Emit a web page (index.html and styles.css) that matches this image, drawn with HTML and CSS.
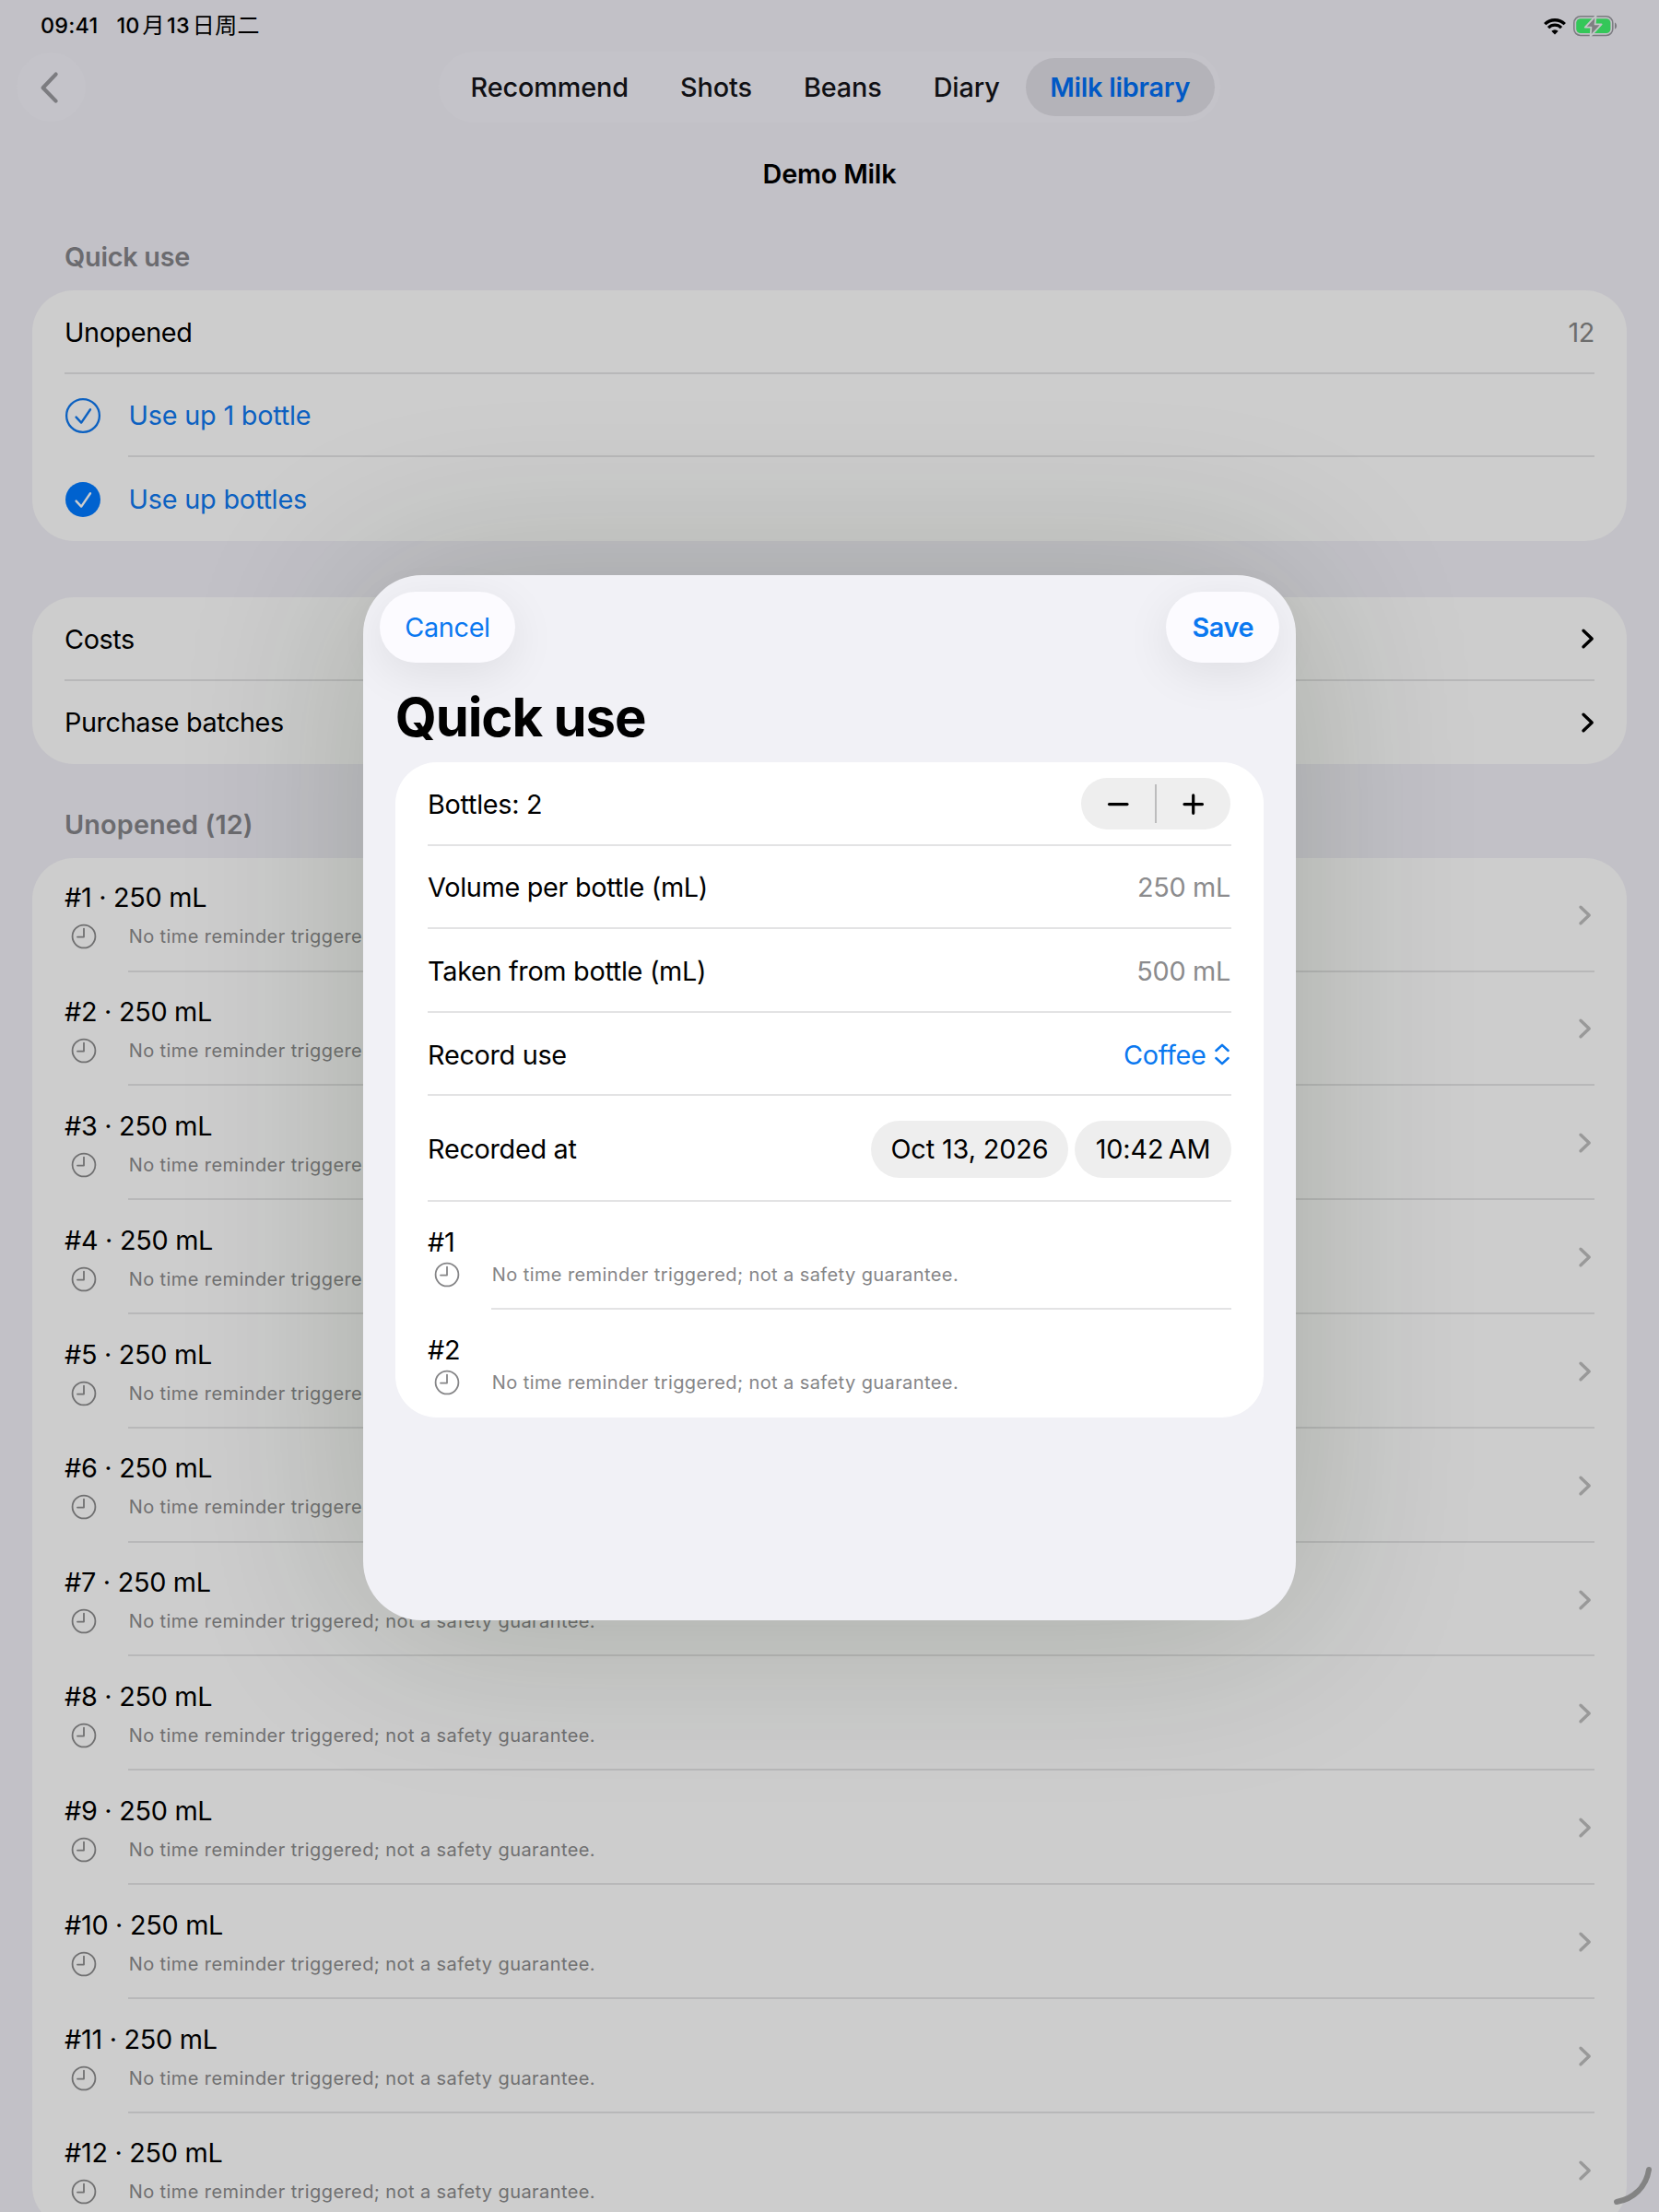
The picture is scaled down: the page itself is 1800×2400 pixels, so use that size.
FILE: index.html
```html
<!DOCTYPE html>
<html lang="en">
<head>
    <meta charset="utf-8">
    <title>Demo Milk</title>
    <link rel="stylesheet" href="styles.css">
</head>
<body>
    <svg class="symbols" aria-hidden="true">
        <symbol id="clock" viewBox="0 0 28 28">
            <circle cx="14" cy="14" r="12.4" fill="none" stroke="currentColor" stroke-width="1.8"/>
            <path d="M14 5.6V14.6H7" fill="none" stroke="currentColor" stroke-width="1.8" stroke-linecap="round" stroke-linejoin="round"/>
        </symbol>
        <symbol id="chevron" viewBox="0 0 16 24">
            <path d="M3 3.2L12.2 12L3 20.8" fill="none" stroke="currentColor" stroke-width="3.4" stroke-linecap="round" stroke-linejoin="round"/>
        </symbol>
    </svg>

    <div class="screen">
        <div class="status-bar">
            <span class="time">09:41</span>
            <span class="date">10<i>月</i>13<i>日周二</i></span>
            <svg class="wifi" viewBox="0 0 26 19">
                <path d="M2.2 7.2A15.3 15.3 0 0 1 23.8 7.2" fill="none" stroke="#000" stroke-width="3.3"/>
                <path d="M6 11.1A9.9 9.9 0 0 1 20 11.1" fill="none" stroke="#000" stroke-width="3.3"/>
                <path d="M13 18.4L9.3 14.7A5.3 5.3 0 0 1 16.7 14.7Z" fill="#000"/>
            </svg>
            <svg class="battery" viewBox="0 0 50 24">
                <rect x="1.8" y="1.8" width="42" height="20.6" rx="7" fill="none" stroke="#7b7b80" stroke-width="1.5"/>
                <rect x="4.2" y="4.2" width="37.2" height="15.8" rx="4.6" fill="#34c759"/>
                <path d="M46 8.6C48.8 9.6 48.8 14.6 46 15.6Z" fill="#7b7b80"/>
                <path d="M25.6 0.8L13.8 13.6H20.4L19.6 23.4L31.6 10.4H24.6Z" fill="#7f8082" stroke="#c3c7c8" stroke-width="1.8" stroke-linejoin="round"/>
            </svg>
        </div>

        <div class="toolbar">
            <div class="back">
                <svg viewBox="0 0 24 36"><path d="M18.6 3.6L4.6 18.2L18.6 32.6" fill="none" stroke="#7c7c80" stroke-width="4.2" stroke-linecap="round" stroke-linejoin="round"/></svg>
            </div>
            <nav class="tabs">
                <a class="tab">Recommend</a>
                <a class="tab">Shots</a>
                <a class="tab">Beans</a>
                <a class="tab">Diary</a>
                <a class="tab active">Milk library</a>
            </nav>
        </div>

        <h1 class="page-title">Demo Milk</h1>

        <h2 class="section-title first">Quick use</h2>
        <div class="card">
            <div class="row">
                <span>Unopened</span>
                <span class="count">12</span>
            </div>
            <div class="row link inset">
                <svg class="check" viewBox="0 0 40 40">
                    <circle cx="20" cy="20" r="17.9" fill="none" stroke="currentColor" stroke-width="2.3"/>
                    <path d="M12.6 21.6L18.2 27.6L28 13.2" fill="none" stroke="currentColor" stroke-width="2.4" stroke-linecap="round" stroke-linejoin="round"/>
                </svg>
                <span>Use up 1 bottle</span>
            </div>
            <div class="row link">
                <svg class="check" viewBox="0 0 40 40">
                    <circle cx="20" cy="20" r="19" fill="#0062cf"/>
                    <path d="M12.6 21.6L18.2 27.6L28 13.2" fill="none" stroke="#cdcdcd" stroke-width="2.4" stroke-linecap="round" stroke-linejoin="round"/>
                </svg>
                <span>Use up bottles</span>
            </div>
        </div>

        <div class="card spaced">
            <div class="row">
                <span>Costs</span>
                <svg class="chevron dark"><use href="#chevron"/></svg>
            </div>
            <div class="row">
                <span>Purchase batches</span>
                <svg class="chevron dark"><use href="#chevron"/></svg>
            </div>
        </div>

        <h2 class="section-title">Unopened (12)</h2>
        <div class="card">
            <div class="bottle">
                <div class="bottle-info">
                    <div class="bottle-name">#1 · 250 mL</div>
                    <div class="note"><svg class="clock"><use href="#clock"/></svg>No time reminder triggered; not a safety guarantee.</div>
                </div>
                <svg class="chevron"><use href="#chevron"/></svg>
            </div>
            <div class="bottle">
                <div class="bottle-info">
                    <div class="bottle-name">#2 · 250 mL</div>
                    <div class="note"><svg class="clock"><use href="#clock"/></svg>No time reminder triggered; not a safety guarantee.</div>
                </div>
                <svg class="chevron"><use href="#chevron"/></svg>
            </div>
            <div class="bottle">
                <div class="bottle-info">
                    <div class="bottle-name">#3 · 250 mL</div>
                    <div class="note"><svg class="clock"><use href="#clock"/></svg>No time reminder triggered; not a safety guarantee.</div>
                </div>
                <svg class="chevron"><use href="#chevron"/></svg>
            </div>
            <div class="bottle">
                <div class="bottle-info">
                    <div class="bottle-name">#4 · 250 mL</div>
                    <div class="note"><svg class="clock"><use href="#clock"/></svg>No time reminder triggered; not a safety guarantee.</div>
                </div>
                <svg class="chevron"><use href="#chevron"/></svg>
            </div>
            <div class="bottle">
                <div class="bottle-info">
                    <div class="bottle-name">#5 · 250 mL</div>
                    <div class="note"><svg class="clock"><use href="#clock"/></svg>No time reminder triggered; not a safety guarantee.</div>
                </div>
                <svg class="chevron"><use href="#chevron"/></svg>
            </div>
            <div class="bottle">
                <div class="bottle-info">
                    <div class="bottle-name">#6 · 250 mL</div>
                    <div class="note"><svg class="clock"><use href="#clock"/></svg>No time reminder triggered; not a safety guarantee.</div>
                </div>
                <svg class="chevron"><use href="#chevron"/></svg>
            </div>
            <div class="bottle">
                <div class="bottle-info">
                    <div class="bottle-name">#7 · 250 mL</div>
                    <div class="note"><svg class="clock"><use href="#clock"/></svg>No time reminder triggered; not a safety guarantee.</div>
                </div>
                <svg class="chevron"><use href="#chevron"/></svg>
            </div>
            <div class="bottle">
                <div class="bottle-info">
                    <div class="bottle-name">#8 · 250 mL</div>
                    <div class="note"><svg class="clock"><use href="#clock"/></svg>No time reminder triggered; not a safety guarantee.</div>
                </div>
                <svg class="chevron"><use href="#chevron"/></svg>
            </div>
            <div class="bottle">
                <div class="bottle-info">
                    <div class="bottle-name">#9 · 250 mL</div>
                    <div class="note"><svg class="clock"><use href="#clock"/></svg>No time reminder triggered; not a safety guarantee.</div>
                </div>
                <svg class="chevron"><use href="#chevron"/></svg>
            </div>
            <div class="bottle">
                <div class="bottle-info">
                    <div class="bottle-name">#10 · 250 mL</div>
                    <div class="note"><svg class="clock"><use href="#clock"/></svg>No time reminder triggered; not a safety guarantee.</div>
                </div>
                <svg class="chevron"><use href="#chevron"/></svg>
            </div>
            <div class="bottle">
                <div class="bottle-info">
                    <div class="bottle-name">#11 · 250 mL</div>
                    <div class="note"><svg class="clock"><use href="#clock"/></svg>No time reminder triggered; not a safety guarantee.</div>
                </div>
                <svg class="chevron"><use href="#chevron"/></svg>
            </div>
            <div class="bottle">
                <div class="bottle-info">
                    <div class="bottle-name">#12 · 250 mL</div>
                    <div class="note"><svg class="clock"><use href="#clock"/></svg>No time reminder triggered; not a safety guarantee.</div>
                </div>
                <svg class="chevron"><use href="#chevron"/></svg>
            </div>
        </div>

        <!-- Quick use sheet -->
        <div class="sheet">
            <div class="sheet-bar">
                <button class="pill-btn cancel">Cancel</button>
                <button class="pill-btn save">Save</button>
            </div>
            <h2 class="sheet-title">Quick use</h2>
            <div class="form">
                <div class="form-row">
                    <span>Bottles: 2</span>
                    <div class="stepper">
                        <svg viewBox="0 0 80 56"><path d="M30.5 28.6H50" stroke="#000" stroke-width="3.2" stroke-linecap="round"/></svg>
                        <i class="divider"></i>
                        <svg viewBox="0 0 80 56"><path d="M30 28.6H49.5M39.7 18.9V38.3" stroke="#000" stroke-width="3.2" stroke-linecap="round"/></svg>
                    </div>
                </div>
                <div class="form-row">
                    <span>Volume per bottle (mL)</span>
                    <span class="value">250 mL</span>
                </div>
                <div class="form-row">
                    <span>Taken from bottle (mL)</span>
                    <span class="value">500 mL</span>
                </div>
                <div class="form-row">
                    <span>Record use</span>
                    <span class="picker">Coffee
                        <svg viewBox="0 0 18 26"><path d="M2.4 9L9 2.8L15.6 9M2.4 17L9 23.2L15.6 17" fill="none" stroke="currentColor" stroke-width="2.5" stroke-linecap="round" stroke-linejoin="round"/></svg>
                    </span>
                </div>
                <div class="form-row tall">
                    <span>Recorded at</span>
                    <span class="chips">
                        <span class="chip day">Oct 13, 2026</span>
                        <span class="chip hour">10:42&#8239;AM</span>
                    </span>
                </div>
                <div class="entry">
                    <div class="entry-name">#1</div>
                    <div class="note"><svg class="clock"><use href="#clock"/></svg>No time reminder triggered; not a safety guarantee.</div>
                </div>
                <div class="entry">
                    <div class="entry-name">#2</div>
                    <div class="note"><svg class="clock"><use href="#clock"/></svg>No time reminder triggered; not a safety guarantee.</div>
                </div>
            </div>
        </div>

        <!-- window resize handle -->
        <svg class="resize" viewBox="0 0 50 50"><path d="M39 4C36 23 22 36 4 39" fill="none" stroke="#838383" stroke-width="6" stroke-linecap="round"/></svg>
    </div>
</body>
</html>
```

FILE: styles.css
```css
* {
    box-sizing: border-box;
}
body {
    margin: 0;
    font-family: Inter, "Noto Sans CJK SC", sans-serif;
    font-size: 28.8px;
    letter-spacing: -0.35px;
    color: #000;
    background-color: #c2c1c7;
}
h1, h2 {
    margin: 0;
    font-size: inherit;
    font-weight: 600;
}
svg {
    display: block;
    flex: none;
}
.symbols {
    position: absolute;
    width: 0;
    height: 0;
}
.screen {
    position: relative;
    width: 1800px;
    height: 2400px;
    overflow: hidden;
}

/* status bar */
.status-bar {
    display: flex;
    align-items: center;
    height: 56px;
    padding: 0 44px;
    font-size: 23.4px;
    line-height: 28px;
    font-weight: 450;
    letter-spacing: 0.2px;
}
.status-bar span {
    height: 28px;
}
.status-bar .date {
    margin-left: 20px;
}
.status-bar i {
    margin: 0 2px 0 3px;
    font-size: 24px;
    font-style: normal;
    font-weight: 400;
    line-height: 1;
    letter-spacing: 0.4px;
}
.wifi {
    width: 26px;
    height: 19px;
    margin-left: auto;
}
.battery {
    width: 50px;
    height: 24px;
    margin-left: 6px;
}

/* toolbar */
.toolbar {
    display: flex;
    align-items: center;
    height: 77px;
    padding-left: 18px;
}
.back {
    display: flex;
    align-items: center;
    width: 75px;
    height: 75px;
    padding-left: 23.5px;
    border-radius: 50%;
    background-color: #c4c3c9;
}
.back svg {
    width: 24px;
    height: 36px;
}
.tabs {
    display: flex;
    align-items: center;
    width: 848px;
    height: 77px;
    margin-left: 383px;
    padding: 0 6.5px;
    border-radius: 39px;
    background-color: #c4c3c9;
}
.tab {
    height: 63px;
    padding: 0 28px;
    line-height: 63px;
    font-weight: 500;
    letter-spacing: -0.1px;
    color: #101014;
    border-radius: 32px;
    white-space: nowrap;
}
.tab.active {
    padding: 0 26.5px;
    font-weight: 600;
    letter-spacing: -0.25px;
    color: #0159c5;
    background-color: #b4b3b9;
}

.page-title {
    height: 111px;
    line-height: 111px;
    letter-spacing: -0.2px;
    text-align: center;
}
.section-title {
    height: 69px;
    margin: 30.4px 0 2px 70px;
    line-height: 69px;
    letter-spacing: 0.15px;
    color: #6b6b6f;
}
.section-title.first {
    margin-top: 0;
    letter-spacing: -0.25px;
}

/* cards */
.card {
    margin: 0 35px;
    padding: 0 35px;
    border-radius: 45px;
    background-color: #cdcdcd;
}
.card.spaced {
    margin-top: 61px;
}
.row {
    display: flex;
    align-items: center;
    height: 90.67px;
    letter-spacing: -0.4px;
    background: linear-gradient(#b8b8b9, #b8b8b9) right bottom / 100% 2px no-repeat;
}
.row.inset {
    background-size: calc(100% - 69px) 2px;
}
.row:last-child,
.bottle:last-child {
    background: none;
}
.row.link {
    letter-spacing: -0.2px;
    color: #0c61c1;
}
.count {
    margin-left: auto;
    color: #6d6d6d;
}
.check {
    width: 40px;
    height: 40px;
    margin-right: 29.5px;
}
.chevron {
    width: 16px;
    height: 24px;
    margin-left: auto;
    margin-right: 2px;
    color: #999;
}
.chevron.dark {
    margin-right: -1px;
    color: #000;
}
.bottle {
    display: flex;
    align-items: center;
    height: 123.83px;
    background: linear-gradient(#b8b8b9, #b8b8b9) right bottom / calc(100% - 69px) 2px no-repeat;
}
.bottle-info {
    align-self: flex-start;
    margin-top: 22.6px;
}
.bottle-name {
    line-height: 42px;
    letter-spacing: -0.28px;
}
.note {
    display: flex;
    align-items: center;
    height: 42px;
    font-size: 20px;
    letter-spacing: 0.41px;
    color: #707071;
}
.clock {
    width: 28px;
    height: 28px;
    margin: 0 34.7px 0 7px;
}

/* sheet over the page */
.sheet {
    position: absolute;
    left: 394.4px;
    top: 624px;
    width: 1011.3px;
    height: 1133.7px;
    padding: 18px 17.4px;
    border-radius: 64px;
    background-color: #f1f1f6;
    box-shadow: 0 4px 200px rgba(20, 40, 10, 0.2);
}
.sheet-bar {
    display: flex;
    justify-content: space-between;
}
.pill-btn {
    height: 77px;
    padding: 0;
    border: 0;
    border-radius: 39px;
    font: inherit;
    letter-spacing: inherit;
    color: #0a78f0;
    background-color: #fcfbff;
    box-shadow: 0 12px 50px rgba(0, 0, 0, 0.08);
}
.pill-btn.cancel {
    width: 147.5px;
}
.pill-btn.save {
    width: 123px;
    font-weight: 600;
}
.sheet-title {
    height: 108px;
    padding-left: 17px;
    line-height: 118px;
    font-size: 58px;
    font-weight: 700;
    letter-spacing: -1.1px;
}
.form {
    margin: 0 17.3px;
    padding: 0 35px;
    border-radius: 45px;
    letter-spacing: -0.3px;
    background-color: #fff;
}
.form-row {
    display: flex;
    align-items: center;
    justify-content: space-between;
    height: 90.6px;
    background: linear-gradient(#e3e3e4, #e3e3e4) bottom / 100% 2px no-repeat;
}
.form-row.tall {
    height: 115px;
}
.stepper {
    display: flex;
    align-items: center;
    width: 162px;
    height: 56px;
    margin-right: 1px;
    border-radius: 28px;
    background-color: #eee;
}
.stepper svg {
    width: 80px;
    height: 56px;
}
.divider {
    width: 2px;
    height: 42px;
    background-color: #bcbcbd;
}
.value {
    padding-right: 1px;
    color: #8b8b8d;
}
.picker {
    display: flex;
    align-items: center;
    gap: 8px;
    color: #0a78f0;
}
.picker svg {
    width: 18px;
    height: 26px;
    margin-right: 1.5px;
}
.chips {
    display: flex;
    gap: 7px;
    letter-spacing: -0.1px;
}
.chip {
    height: 62px;
    line-height: 62px;
    border-radius: 31px;
    text-align: center;
    background-color: #eee;
}
.chip.day {
    width: 214px;
}
.chip.hour {
    width: 170px;
}
.entry {
    height: 117px;
    padding-top: 26px;
    background: linear-gradient(#e3e3e4, #e3e3e4) right bottom / calc(100% - 69px) 2px no-repeat;
}
.entry:last-child {
    background: none;
}
.entry-name {
    line-height: 35px;
}
.entry .note {
    height: 35px;
    color: #858587;
}

.resize {
    position: absolute;
    right: 0;
    bottom: 0;
    width: 50px;
    height: 50px;
}
```
